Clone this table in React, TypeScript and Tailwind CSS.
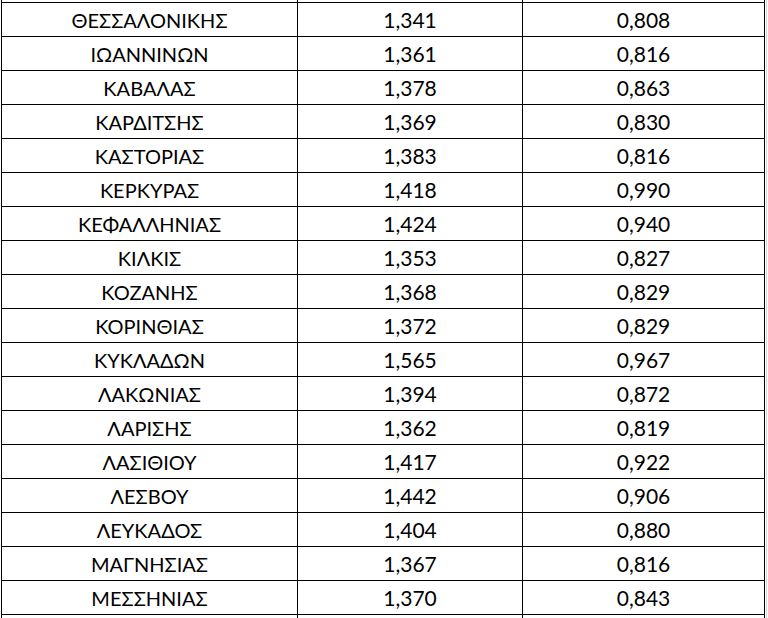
const rows: [string, string, string][] = [
  ["ΘΕΣΣΑΛΟΝΙΚΗΣ", "1,341", "0,808"],
  ["ΙΩΑΝΝΙΝΩΝ", "1,361", "0,816"],
  ["ΚΑΒΑΛΑΣ", "1,378", "0,863"],
  ["ΚΑΡΔΙΤΣΗΣ", "1,369", "0,830"],
  ["ΚΑΣΤΟΡΙΑΣ", "1,383", "0,816"],
  ["ΚΕΡΚΥΡΑΣ", "1,418", "0,990"],
  ["ΚΕΦΑΛΛΗΝΙΑΣ", "1,424", "0,940"],
  ["ΚΙΛΚΙΣ", "1,353", "0,827"],
  ["ΚΟΖΑΝΗΣ", "1,368", "0,829"],
  ["ΚΟΡΙΝΘΙΑΣ", "1,372", "0,829"],
  ["ΚΥΚΛΑΔΩΝ", "1,565", "0,967"],
  ["ΛΑΚΩΝΙΑΣ", "1,394", "0,872"],
  ["ΛΑΡΙΣΗΣ", "1,362", "0,819"],
  ["ΛΑΣΙΘΙΟΥ", "1,417", "0,922"],
  ["ΛΕΣΒΟΥ", "1,442", "0,906"],
  ["ΛΕΥΚΑΔΟΣ", "1,404", "0,880"],
  ["ΜΑΓΝΗΣΙΑΣ", "1,367", "0,816"],
  ["ΜΕΣΣΗΝΙΑΣ", "1,370", "0,843"],
];

const cols = "grid grid-cols-[296px_225px_243px]";

// partial row cut off at top / bottom of the screenshot
const Stub = ({ h }: { h: string }) => (
  <div className={`${cols} ${h}`}>
    <div className="border-l border-black" />
    <div className="border-l border-black" />
    <div className="border-x border-black" />
  </div>
);

const App = () => {
  return (
    <div className="flex h-[618px] w-[768px] overflow-hidden bg-white font-['Lato',sans-serif] text-[20px] text-black">
      <div className="w-[1px]" />
      <div className="w-[764px]">
        <Stub h="h-[2px]" />
        {rows.map(([name, a, b]) => (
          <div key={name} className={`${cols} h-[34px] border-t border-black`}>
            <div className="flex items-center justify-center border-l border-black pt-[1px]">{name}</div>
            <div className="flex items-center justify-center border-l border-black pt-[1px] text-[21px]">{a}</div>
            <div className="flex items-center justify-center border-x border-black pt-[1px] text-[21px]">{b}</div>
          </div>
        ))}
        <div className="border-t border-black">
          <Stub h="h-[4px]" />
        </div>
      </div>
      <div className="w-[1px]" />
      <div className="w-[1px] bg-[#dadada]" />
    </div>
  );
};

export default App;
